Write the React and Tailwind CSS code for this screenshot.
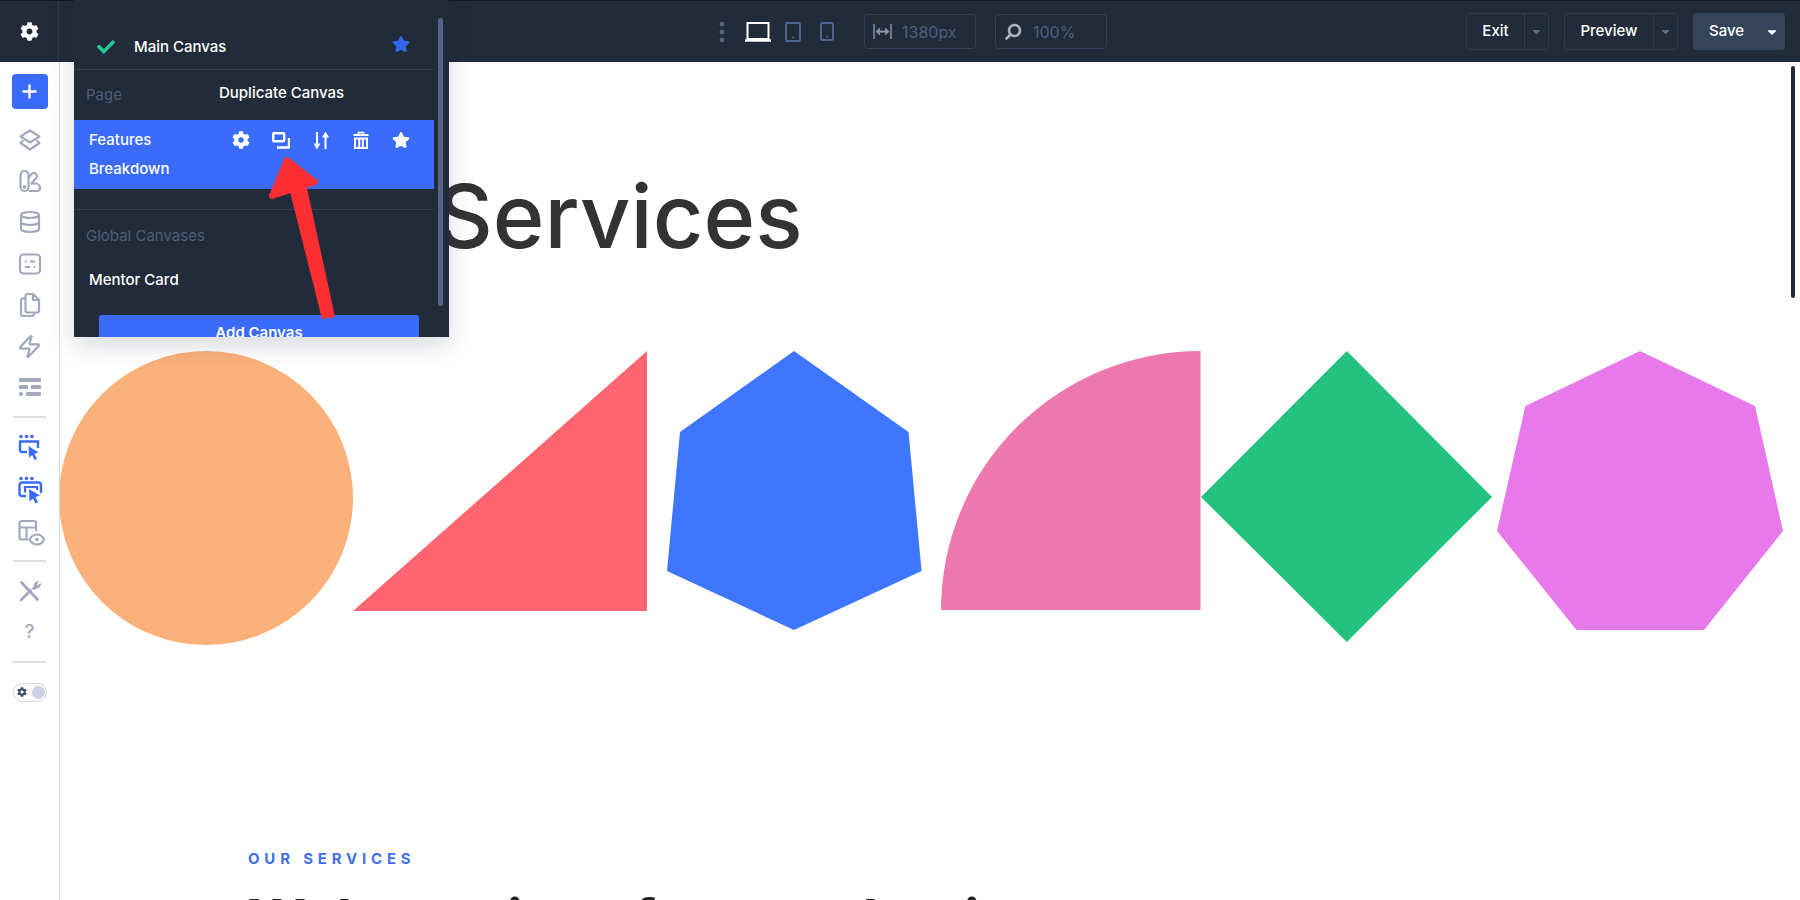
import React from "react";
import { FaCog, FaStar, FaCheck, FaCaretDown } from "react-icons/fa";
import { Database, Zap } from "lucide-react";

const FONT = "font-['Inter','Liberation_Sans',sans-serif]";

// sidebar glyphs
const LayersIcon = () => (
  <svg width="24" height="24" viewBox="0 0 24 24" fill="none" stroke="currentColor" strokeWidth="2.200" strokeLinejoin="round">
    <path d="M12 2.500 21.500 8.500 12 14.500 2.500 8.500z" />
    <path d="M5.500 12.500 2.500 15 12 21.500 21.500 15l-3-2.500" />
  </svg>
);

const Swatch = () => (
  <svg width="24" height="24" viewBox="0 0 24 24" fill="none" stroke="currentColor" strokeWidth="2.2" strokeLinejoin="round">
    <rect x="2.5" y="2" width="8" height="20" rx="4" />
    <path d="M10.5 9 14 4.5c1-1 2.4-1 3.4 0l1 1c.8 1 .8 2.200 0 3.200L13 15" />
    <path d="M10.500 22H19c2.500 0 3-1.500 3-3 0-2.500-2-4.500-4.500-4.500H13" />
    <circle cx="6.500" cy="18" r="0.8" fill="currentColor" />
  </svg>
);

const FormIcon = () => (
  <svg width="24" height="24" viewBox="0 0 24 24" fill="none" stroke="currentColor" strokeWidth="2.200">
    <rect x="2" y="2.500" width="20" height="19" rx="3.500" />
    <path d="M7 9.500h1.500M12 9.500h5M7 15h5M15.500 15H17" />
  </svg>
);

const Pages = () => (
  <svg width="24" height="24" viewBox="0 0 24 24" fill="none" stroke="currentColor" strokeWidth="2.200" strokeLinejoin="round">
    <path d="M7.500 5.500H5a2 2 0 0 0-2 2V21a2 2 0 0 0 2 2h9a2 2 0 0 0 2-2v-1" />
    <path d="M7.500 3a2 2 0 0 1 2-2h5.500l6 6v10.500a2 2 0 0 1-2 2h-9.500a2 2 0 0 1-2-2z" />
    <path d="M15 1.500V7h5.500" />
  </svg>
);

const Rows = () => (
  <svg width="24" height="20" viewBox="0 0 24 20" fill="currentColor">
    <rect x="1" y="1" width="22" height="4" rx="0.800" />
    <rect x="1" y="8" width="9" height="4" rx="0.800" />
    <rect x="13" y="8" width="10" height="4" rx="0.800" />
    <circle cx="3" cy="17" r="2" />
    <rect x="8" y="15" width="15" height="4" rx="0.800" />
  </svg>
);

const CanvasPointer = ({ stacked }) => (
  <svg width="26" height="28" viewBox="0 0 26 28" fill="none">
    <circle cx="4" cy="2.500" r="1.800" fill="#3a6bfb" />
    <circle cx="9.500" cy="2.500" r="1.800" fill="#3a6bfb" />
    <circle cx="15" cy="2.500" r="1.800" fill="#3a6bfb" />
    {stacked ? (
      <>
        <path d="M9 20H5a2.500 2.500 0 0 1-2.500-2.500V9a2.500 2.500 0 0 1 2.500-2.500h16.500A2.500 2.500 0 0 1 24 9v8" stroke="#3a6bfb" strokeWidth="2.400" />
        <path d="M9 15.500H8V11h12v3" stroke="#3a6bfb" strokeWidth="2.200" />
      </>
    ) : (
      <path d="M10 18H5a2 2 0 0 1-2-2V7.500h18V14" stroke="#3a6bfb" strokeWidth="2.400" />
    )}
    <path d={stacked ? "M12 13l11 6.500-4.500 1.500 2.500 5-2.500 1.500-2.500-5-3.500 3z" : "M11.500 12l10 6.500-4 1.300 2.500 5-2.500 1.200-2.300-5-3.200 2.800z"} fill="#3a6bfb" />
  </svg>
);

const LayoutEye = () => (
  <svg width="28" height="28" viewBox="0 0 28 28" fill="none" stroke="currentColor" strokeWidth="2.200">
    <path d="M11 20.500H4.500a2 2 0 0 1-2-2V4a2 2 0 0 1 2-2h12.500a2 2 0 0 1 2 2v8" />
    <path d="M2.500 8.500h16.500M9.500 8.500v12" />
    <path d="M12.500 20.500c2-3.500 4.500-5 7.500-5s5.500 1.500 7 5c-1.500 3.500-4 5-7 5s-5.500-1.500-7.500-5z" fill="#fff" />
    <circle cx="20" cy="20.500" r="1.800" fill="currentColor" stroke="none" />
  </svg>
);

const Tools = () => (
  <svg width="24" height="24" viewBox="0 0 24 24" fill="none" stroke="currentColor" strokeLinecap="round">
    <path d="M3.500 3.500 19.500 20.500" strokeWidth="2.800" />
    <path d="M3 21l9.500-9.500" strokeWidth="2.800" />
    <path d="M14.500 9.500l2-2c-.5-2 .5-4 3.500-5l-2 3 1.500 1.500 3-2c-.5 3-2.500 4.500-5 4l-1.500 1.500z" fill="currentColor" strokeWidth="1.200" strokeLinejoin="round" />
  </svg>
);

const Slot = ({ children }) => (
  <div className="h-[41.300px] flex items-center justify-center text-[#a3a9bd]">{children}</div>
);

function Sidebar() {
  return (
    <aside className="w-[60px] shrink-0 border-r border-[#d5d8e0] bg-white flex flex-col items-center pt-[12px]">
      <div className="w-[36px] h-[35px] rounded bg-[#3a6bfb] flex items-center justify-center mb-[10px]">
        <svg width="15" height="15" viewBox="0 0 15 15" stroke="#fff" strokeWidth="2.400" strokeLinecap="round">
          <path d="M7.500 1.500v12M1.500 7.500h12" />
        </svg>
      </div>
      <Slot><LayersIcon /></Slot>
      <Slot><Swatch /></Slot>
      <Slot><Database size={24} strokeWidth={2.2} /></Slot>
      <Slot><FormIcon /></Slot>
      <Slot><Pages /></Slot>
      <Slot><Zap size={25} strokeWidth={2.2} /></Slot>
      <Slot><Rows /></Slot>
      <div className="w-[33px] h-0.5 bg-[#dcdfe6] mt-[8px] mb-[9px]" />
      <div className="h-[42px] flex items-center justify-center"><CanvasPointer /></div>
      <div className="h-[42px] flex items-center justify-center"><CanvasPointer stacked /></div>
      <div className="h-[44px] flex items-center justify-center text-[#a3a9bd] pl-[2px]"><LayoutEye /></div>
      <div className="w-[33px] h-0.5 bg-[#dcdfe6] mt-[5px] mb-[8px]" />
      <Slot><Tools /></Slot>
      <Slot><span className={`${FONT} text-[19px] font-medium`}>?</span></Slot>
      <div className="w-[33px] h-0.5 bg-[#dcdfe6] mt-[8px]" />
      <div className="mt-[20px] w-[34px] h-[19px] rounded-full border border-[#d5d8e0] flex items-center justify-between pl-[3px] pr-[1px]">
        <FaCog size={10} className="text-[#3d4a66]" />
        <span className="w-[13px] h-[13px] rounded-full bg-[#ccd0e0]" />
      </div>
    </aside>
  );
}

const SplitButton = ({ label, w }) => (
  <div className={`${w} h-[37px] flex items-stretch border border-[#303b4c] rounded`}>
    <span className="flex-1 flex items-center justify-center text-[15px] font-medium text-white">{label}</span>
    <span className="w-[24px] border-l border-[#303b4c] flex items-center justify-center">
      <FaCaretDown size={13} className="text-[#5a6a8d]" />
    </span>
  </div>
);

function TopBar() {
  return (
    <header className="h-[62px] shrink-0 flex items-center bg-[#222b39] border-t border-[#151b26]">
      <div className="w-[59px] h-full shrink-0 border-r border-[#303948] flex items-center justify-center">
        <FaCog size={19} className="text-white" />
      </div>
      <div className="flex items-center ml-[659px]">
        <svg width="8" height="22" viewBox="0 0 8 22" fill="#566488">
          <circle cx="4" cy="3" r="2.400" /><circle cx="4" cy="11" r="2.400" /><circle cx="4" cy="19" r="2.400" />
        </svg>
        <svg className="ml-[19px]" width="26" height="20" viewBox="0 0 26 20" fill="none" stroke="#fff">
          <rect x="2.500" y="1" width="21" height="16" strokeWidth="2" />
          <path d="M0 18.500h26" strokeWidth="2.400" />
        </svg>
        <svg className="ml-[14px]" width="16" height="20" viewBox="0 0 16 20" fill="none">
          <rect x="1" y="1" width="14" height="18" rx="1" stroke="#4e6390" strokeWidth="2" />
          <circle cx="8" cy="15.500" r="1" fill="#4e6390" />
        </svg>
        <svg className="ml-[19px]" width="14" height="19" viewBox="0 0 14 19" fill="none">
          <rect x="1" y="1" width="12" height="17" rx="1.500" stroke="#4e6390" strokeWidth="2" />
          <circle cx="7" cy="14.500" r="1" fill="#4e6390" />
        </svg>
        <div className="ml-[30px] w-[112px] h-[35px] border border-[#35415a] rounded flex items-center pl-2 gap-[10px]">
          <svg width="19" height="17" viewBox="0 0 19 17" fill="none" stroke="#8a96b0">
            <path d="M1 1v15M18 1v15" strokeWidth="1.400" />
            <path d="M5 8.500h9" strokeWidth="2" />
            <path d="M6.500 5 3 8.500 6.500 12zM12.500 5 16 8.500 12.500 12z" fill="#8a96b0" strokeWidth="0.600" />
          </svg>
          <span className="text-[16px] text-[#4e5d7e]">1380px</span>
        </div>
        <div className="ml-[19px] w-[112px] h-[35px] border border-[#35415a] rounded flex items-center pl-2 gap-[11px]">
          <svg width="18" height="17" viewBox="0 0 18 17" fill="none" stroke="#a9b1c4" strokeWidth="2.600" strokeLinecap="round">
            <circle cx="10.500" cy="7.500" r="5.500" />
            <path d="M5.500 12.500l-3 3" />
          </svg>
          <span className="text-[16px] text-[#4e5d7e]">100%</span>
        </div>
      </div>
      <div className="ml-auto flex items-center gap-[15px] pr-[15px]">
        <SplitButton label="Exit" w="w-[83px]" />
        <SplitButton label="Preview" w="w-[114px]" />
        <div className="w-[92px] h-[37px] rounded bg-[#34445a] flex items-center justify-between pl-[16px] pr-[6px]">
          <span className="text-[15px] font-medium text-white">Save</span>
          <FaCaretDown size={14} className="text-white" />
        </div>
      </div>
    </header>
  );
}

function CanvasPanel() {
  return (
    <div className="absolute left-[74px] top-0 w-[375px] h-[337px] overflow-hidden bg-[#222b39] shadow-[0_8px_24px_rgba(30,40,60,0.18)] z-10 text-[15px]">
      <div className="w-[360px]">
        <div className="h-[70px] border-b border-[#333d4d] flex items-center pt-[18px] pl-[23px]">
          <FaCheck size={18} className="mt-[7px] text-[#1fc88f]" />
          <span className="mt-[7px] ml-[19px] font-medium text-white text-[15px]">Main Canvas</span>
          <FaStar size={18} className="ml-auto mr-[24px] text-[#3366ee]" />
        </div>
        <div className="h-[50px] flex items-center pl-[12px]">
          <span className="w-[133px] text-[#4f5b78]">Page</span>
          <span className="mb-[4px] font-medium text-white">Duplicate Canvas</span>
        </div>
        <div className="h-[69px] bg-[#3a6bfb] pt-[5px] flex">
          <div className="w-[147px] pl-[15px] font-medium text-white leading-[30px]">
            <div>Features</div>
            <div className="mt-[-1px]">Breakdown</div>
          </div>
          <div className="flex h-[30px] text-white">
            <span className="w-10 flex items-center justify-center"><FaCog size={18} /></span>
            <span className="w-10 flex items-center justify-center">
              <svg width="18" height="17" viewBox="0 0 18 17" fill="none" stroke="#fff" strokeWidth="2.400">
                <rect x="1.200" y="1.200" width="11" height="8" rx="0.800" />
                <path d="M17 6v8.500a1 1 0 0 1-1 1H5" />
              </svg>
            </span>
            <span className="w-10 flex items-center justify-center">
              <svg width="17" height="19" viewBox="0 0 17 19" fill="none" stroke="#fff" strokeWidth="2">
                <path d="M4 1v13M12.500 18V5" />
                <path d="M0.500 12.500h7L4 18.500zM9 6.500h7L12.500 0.500z" fill="#fff" strokeWidth="0" />
              </svg>
            </span>
            <span className="w-10 flex items-center justify-center">
              <svg width="16" height="18" viewBox="0 0 16 18" fill="none" stroke="#fff" strokeWidth="2">
                <path d="M0.500 4h15" />
                <path d="M5.500 3.500V1.500h5v2" strokeWidth="1.600" />
                <path d="M2 7.500h12V17H2zM6.200 8v9M9.800 8v9" />
              </svg>
            </span>
            <span className="w-10 flex items-center justify-center"><FaStar size={18} /></span>
          </div>
        </div>
        <div className="h-[21px] border-b border-[#333d4d]" />
        <div className="pl-[12px] pt-[2px] h-[50px] flex items-center text-[#4f5b78]">Global Canvases</div>
        <div className="pl-[15px] pt-[2px] h-[38px] flex items-center font-medium text-white">Mentor Card</div>
        <div className="ml-[25px] mt-[17px] w-[320px] h-[40px] rounded-t-[3px] bg-[#3a6bfb] pt-[6px] text-center font-semibold text-white leading-[24px]">Add Canvas</div>
      </div>
      <div className="absolute left-[364px] top-[18px] w-[5px] h-[288px] rounded-full bg-[#566488]" />
    </div>
  );
}

// the row of coloured shapes on the canvas
function Shapes() {
  return (
    <div className="flex items-start mt-[91px] h-[295px]">
      <div className="ml-[-1px] w-[294px] h-[294px] shrink-0 rounded-full bg-[#fbb179]" />
      <svg className="shrink-0" width="294" height="260" viewBox="0 0 294 260"><path d="M294 0V260H0z" fill="#ff6570" /></svg>
      <svg className="ml-[20px] shrink-0" width="255" height="280" viewBox="0 0 255 280">
        <path d="M127 0 241.500 81 254.600 220 127 279 0 220 13 81z" fill="#3f76ff" />
      </svg>
      <svg className="ml-[19px] shrink-0" width="260" height="259" viewBox="0 0 260 259">
        <path d="M259.500 0V259H0A259.500 259 0 0 1 259.500 0z" fill="#ec78ae" />
      </svg>
      <svg className="shrink-0" width="291" height="291" viewBox="0 0 291 291">
        <path d="M145.800 0 291 146 145.800 291 0 146z" fill="#22c27e" />
      </svg>
      <svg className="ml-[5px] shrink-0" width="286" height="280" viewBox="0 0 286 280">
        <path d="M143 0 258 55 286 180 207 279H79.500L0 180 28.400 55z" fill="#e879ea" />
      </svg>
    </div>
  );
}

export default function App() {
  return (
    <div className={`${FONT} relative w-[1800px] h-[900px] overflow-hidden flex flex-col bg-white`}>
      <TopBar />
      <div className="flex flex-1 min-h-0">
        <Sidebar />
        <main className="flex-1 overflow-hidden">
          <h1 className="pl-[376px] mt-[110px] text-[88px] leading-[88px] font-medium text-[#333]">Services</h1>
          <Shapes />
          <div className="ml-[188px] mt-[204px] text-[15px] leading-[18px] font-bold tracking-[0.32em] text-[#3f6fea]">OUR SERVICES</div>
          <h2 className="ml-[188px] mt-[22px] text-[56px] leading-[60px] font-bold text-[#222] whitespace-nowrap">Web services for your business</h2>
        </main>
      </div>
      <CanvasPanel />
      {/* annotation arrow */}
      <svg className="absolute left-[260px] top-[150px] z-20" width="85" height="175" viewBox="0 0 85 175" fill="none">
        <path d="M30 42 47 38 75 167 62 169z" fill="#ff2e33" />
        <path d="M27 10 55 32 12 46z" fill="#ff2e33" stroke="#ff2e33" strokeWidth="6" strokeLinejoin="round" />
      </svg>
      {/* page scrollbar */}
      <div className="absolute left-[1791px] top-[66px] w-1 h-[232px] rounded-full bg-[#222b39]" />
    </div>
  );
}
